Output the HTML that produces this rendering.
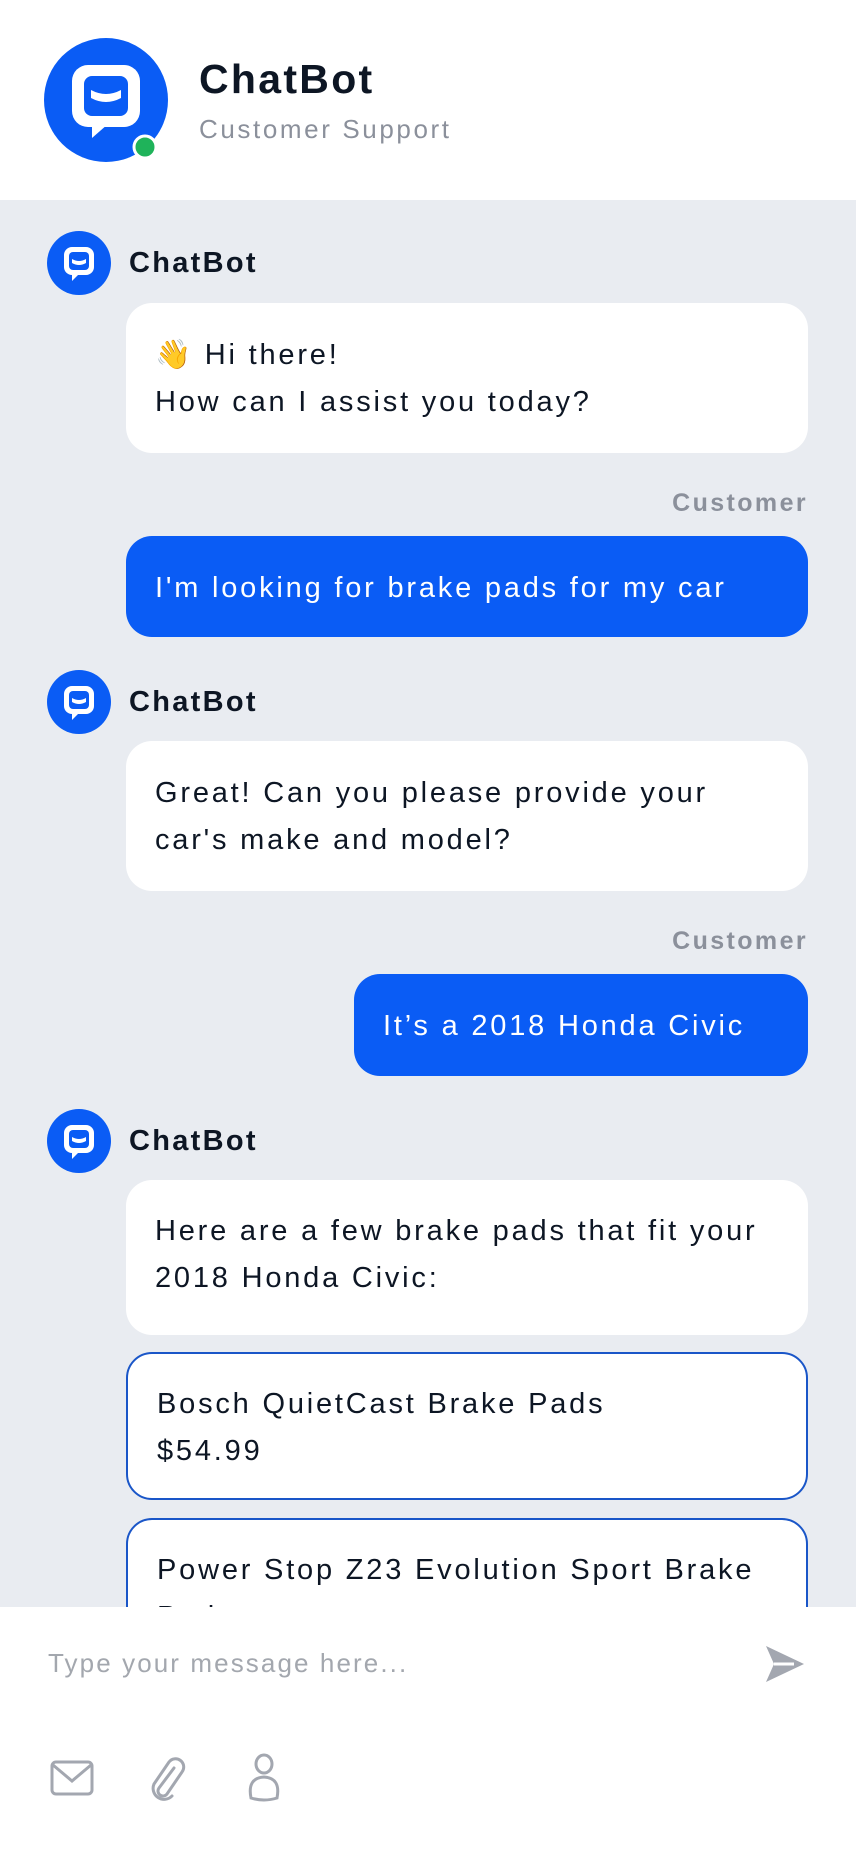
<!DOCTYPE html>
<html><head><meta charset="utf-8"><style>
*{margin:0;padding:0;box-sizing:border-box}
body{width:856px;height:1852px;overflow:hidden;font-family:"Liberation Sans",sans-serif;background:#fff;position:relative;color:#0d1624}
.abs{position:absolute}
.chat{position:absolute;left:0;top:200px;width:856px;height:1407px;background:#e9ecf1;overflow:hidden}
.bub{position:absolute;left:126px;width:682px;background:#fff;border-radius:26px;font-size:29px;letter-spacing:2.8px;line-height:47px;padding:0 29px;color:#0d1624;white-space:nowrap}
.blue{background:#0a5cf5;color:#fff}
.card{border:2px solid #1a56c8}
.name{position:absolute;left:129px;font-size:29px;letter-spacing:2.3px;font-weight:bold;color:#0d1624}
.cust{position:absolute;right:48px;font-size:25px;letter-spacing:2.4px;font-weight:bold;color:#8b909b}
</style></head><body>
<svg class="abs" style="left:44px;top:38px" width="128" height="128" viewBox="0 0 128 128">
<circle cx="62" cy="62" r="62" fill="#0a5cf5"/>
<rect x="28" y="27" width="68" height="62" rx="16" fill="#fff"/>
<path d="M48 86 L48 100 L64 86Z" fill="#fff"/>
<rect x="40" y="38" width="44" height="40" rx="8" fill="#0a5cf5"/>
<path d="M47 52 Q62 60 77 52 L77 60 Q62 68 47 60Z" fill="#fff"/>
<circle cx="101" cy="109" r="11" fill="#1fb35a" stroke="#fff" stroke-width="3"/>
</svg>
<div class="abs" style="left:199px;top:56px;font-size:41px;letter-spacing:2.3px;font-weight:bold;color:#0d1624">ChatBot</div>
<div class="abs" style="left:199px;top:114px;font-size:26px;letter-spacing:2.6px;color:#8b909b">Customer Support</div>

<div class="chat">
<svg width="0" height="0"><defs><g id="av"><circle cx="32" cy="32" r="32" fill="#0a5cf5"/><rect x="17" y="16" width="30" height="28" rx="8" fill="#fff"/><path d="M25 42 L25 50 L33 42Z" fill="#fff"/><rect x="22" y="21" width="20" height="18" rx="4" fill="#0a5cf5"/><path d="M25 28 Q32 32 39 28 L39 32 Q32 36 25 32Z" fill="#fff"/></g></defs></svg>
<svg class="abs" style="left:47px;top:31px" width="64" height="64"><use href="#av"/></svg>
<div class="name" style="top:47px">ChatBot</div>
<div class="bub" style="top:103px;height:150px;padding-top:29px">👋 Hi there!<br>How can I assist you today?</div>
<div class="cust" style="top:289px">Customer</div>
<div class="bub blue" style="top:336px;height:101px;padding-top:29px">I'm looking for brake pads for my car</div>
<svg class="abs" style="left:47px;top:470px" width="64" height="64"><use href="#av"/></svg>
<div class="name" style="top:486px">ChatBot</div>
<div class="bub" style="top:541px;height:150px;padding-top:29px">Great! Can you please provide your<br>car's make and model?</div>
<div class="cust" style="top:727px">Customer</div>
<div class="bub blue" style="left:354px;width:454px;top:774px;height:102px;padding-top:29px">It’s a 2018 Honda Civic</div>
<svg class="abs" style="left:47px;top:909px" width="64" height="64"><use href="#av"/></svg>
<div class="name" style="top:925px">ChatBot</div>
<div class="bub" style="top:980px;height:155px;padding-top:28px">Here are a few brake pads that fit your<br>2018 Honda Civic:</div>
<div class="bub card" style="top:1152px;height:148px;padding-top:27px">Bosch QuietCast Brake Pads<br>$54.99</div>
<div class="bub card" style="top:1318px;height:160px;padding-top:27px">Power Stop Z23 Evolution Sport Brake<br>Pads</div>
</div>

<div class="abs" style="left:48px;top:1648px;font-size:26px;letter-spacing:2.1px;color:#a3a7ae">Type your message here...</div>
<svg class="abs" style="left:764px;top:1644px" width="42" height="40" viewBox="0 0 42 40"><path d="M2 2 L40 20 L2 38 L10 20Z" fill="#a3a7b0"/><path d="M10 20 L30 20" stroke="#fff" stroke-width="3"/></svg>
<svg class="abs" style="left:50px;top:1758px" width="44" height="40" viewBox="0 0 44 40" fill="none" stroke="#a3a7b0" stroke-width="3"><rect x="2" y="4" width="40" height="32" rx="4"/><path d="M3 7 L22 23 L41 7"/></svg>
<svg class="abs" style="left:146px;top:1754px" width="44" height="48" viewBox="0 0 44 48" fill="none" stroke="#a3a7b0" stroke-width="3" stroke-linecap="round"><path d="M28 14 L13 34 a5 5 0 0 0 8 6 L36 18 a8 8 0 0 0 -13 -10 L8 30 a11 11 0 0 0 18 12"/></svg>
<svg class="abs" style="left:245px;top:1752px" width="38" height="52" viewBox="0 0 38 52" fill="none" stroke="#a3a7b0" stroke-width="3"><ellipse cx="19" cy="12" rx="8" ry="9"/><path d="M6 46 Q2 26 19 25 Q36 26 32 46 Q19 50 6 46Z"/></svg>
</body></html>
